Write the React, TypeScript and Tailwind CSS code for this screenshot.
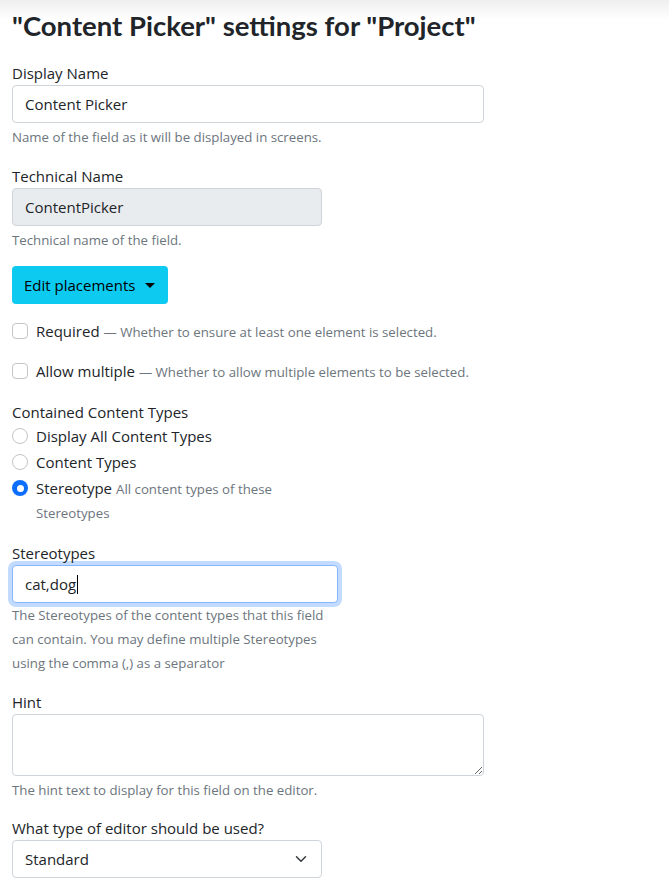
import React from "react";

const font = { fontFamily: '"Open Sans", "Noto Sans", sans-serif' };

function Label({ children }: { children: React.ReactNode }) {
  return <div className="text-[15px] leading-6 text-[#212529]">{children}</div>;
}

function Help({ children, className = "" }: { children: React.ReactNode; className?: string }) {
  return <div className={"mt-1 text-[13.25px] leading-[21px] text-[#6c757d] " + className}>{children}</div>;
}

function Check({ label, hint }: { label: string; hint: string }) {
  return (
    <div className="flex h-6 items-start leading-6">
      <span className="mt-1 mr-2 h-4 w-4 shrink-0 rounded-[4px] border border-[#c4c4c4] bg-white" />
      <span className="text-[15px] leading-6 text-[#212529]">
        {label} <span className="text-[13.25px] leading-4 text-[#6c757d]">— {hint}</span>
      </span>
    </div>
  );
}

function RadioMark({ checked }: { checked?: boolean }) {
  return checked ? (
    <span className="mt-1 mr-2 flex h-4 w-4 shrink-0 items-center justify-center rounded-full bg-[#0d6efd]">
      <span className="h-[7px] w-[7px] rounded-full bg-white" />
    </span>
  ) : (
    <span className="mt-1 mr-2 h-4 w-4 shrink-0 rounded-full border border-[#c4c4c4] bg-white" />
  );
}

function Radio({ label }: { label: string }) {
  return (
    <div className="mb-[2px] flex items-start leading-6">
      <RadioMark />
      <span className="text-[15px] leading-6 text-[#212529]">{label}</span>
    </div>
  );
}

export default function App() {
  return (
    <div
      className="min-h-screen bg-white bg-[linear-gradient(to_bottom,#efefef_0px,#ffffff_20px)] px-3"
      style={font}
    >
      <h1
        className="pt-[10px] text-[27.5px] font-bold leading-[32px] text-[#212529] mb-[19px]"
        style={{ fontFamily: 'Lato, "Open Sans", sans-serif' }}
      >
        "Content Picker" settings for "Project"
      </h1>

      <div className="mb-4">
        <Label>Display Name</Label>
        <div className="flex h-[38px] w-[472px] items-center rounded-[4px] border border-[#ced4da] bg-white px-3 text-[15px] text-[#212529]">
          Content Picker
        </div>
        <Help>Name of the field as it will be displayed in screens.</Help>
      </div>

      <div className="mb-[15px]">
        <Label>Technical Name</Label>
        <div className="flex h-[38px] w-[310px] items-center rounded-[4px] border border-[#ced4da] bg-[#e9ecef] px-3 text-[15px] text-[#212529]">
          ContentPicker
        </div>
        <Help>Technical name of the field.</Help>
      </div>

      <div className="mb-[15px]">
        <button className="flex h-[38px] w-[156px] items-center rounded-[4px] bg-[#0dcaf0] px-3 text-[15px] text-[#000]">
          Edit placements
          <span className="ml-[10px] h-0 w-0 border-x-[5px] border-t-[5px] border-x-transparent border-t-black" />
        </button>
      </div>

      <div className="mb-4">
        <Check label="Required" hint="Whether to ensure at least one element is selected." />
      </div>

      <div className="mb-[17px]">
        <Check label="Allow multiple" hint="Whether to allow multiple elements to be selected." />
      </div>

      <div className="mb-[16px] w-[326px]">
        <Label>Contained Content Types</Label>
        <Radio label="Display All Content Types" />
        <Radio label="Content Types" />
        <div className="mb-[2px] flex items-start leading-6">
          <RadioMark checked />
          <div className="flex flex-col">
            <div className="flex items-baseline gap-[4px] leading-6">
              <span className="text-[15px] text-[#212529]">Stereotype</span>
              <span className="text-[13.25px] text-[#6c757d]">All content types of these</span>
            </div>
            <span className="text-[13.25px] leading-6 text-[#6c757d]">Stereotypes</span>
          </div>
        </div>
      </div>

      <div className="mb-[15px] w-[326px]">
        <Label>Stereotypes</Label>
        <div className="flex h-[38px] w-[326px] items-center rounded-[4px] border border-[#86b7fe] bg-white px-3 text-[15px] text-[#212529] shadow-[0_0_0_4px_rgba(13,110,253,0.25)]">
          cat,dog<span className="ml-[1px] h-[19px] w-px bg-black" />
        </div>
        <div className="text-[13.25px] leading-6 text-[#6c757d]">
          The Stereotypes of the content types that this field can contain. You may define multiple Stereotypes using the comma (,) as a separator
        </div>
      </div>

      <div className="mb-[15px]">
        <Label>Hint</Label>
        <textarea
          readOnly
          className="block h-[62px] w-[472px] resize-y rounded-[4px] border border-[#ced4da] bg-white px-3 py-1.5 text-[15px] outline-none"
        />
        <Help>The hint text to display for this field on the editor.</Help>
      </div>

      <div className="mb-4">
        <Label>What type of editor should be used?</Label>
        <div className="flex h-[38px] w-[310px] items-center justify-between rounded-[4px] border border-[#ced4da] bg-white pl-3 pr-3 text-[15px] text-[#212529]">
          Standard
          <svg width="16" height="12" viewBox="0 0 16 16" fill="none">
            <path d="m2 5 6 6 6-6" stroke="#343a40" strokeWidth="2" strokeLinecap="round" strokeLinejoin="round" />
          </svg>
        </div>
      </div>
    </div>
  );
}
